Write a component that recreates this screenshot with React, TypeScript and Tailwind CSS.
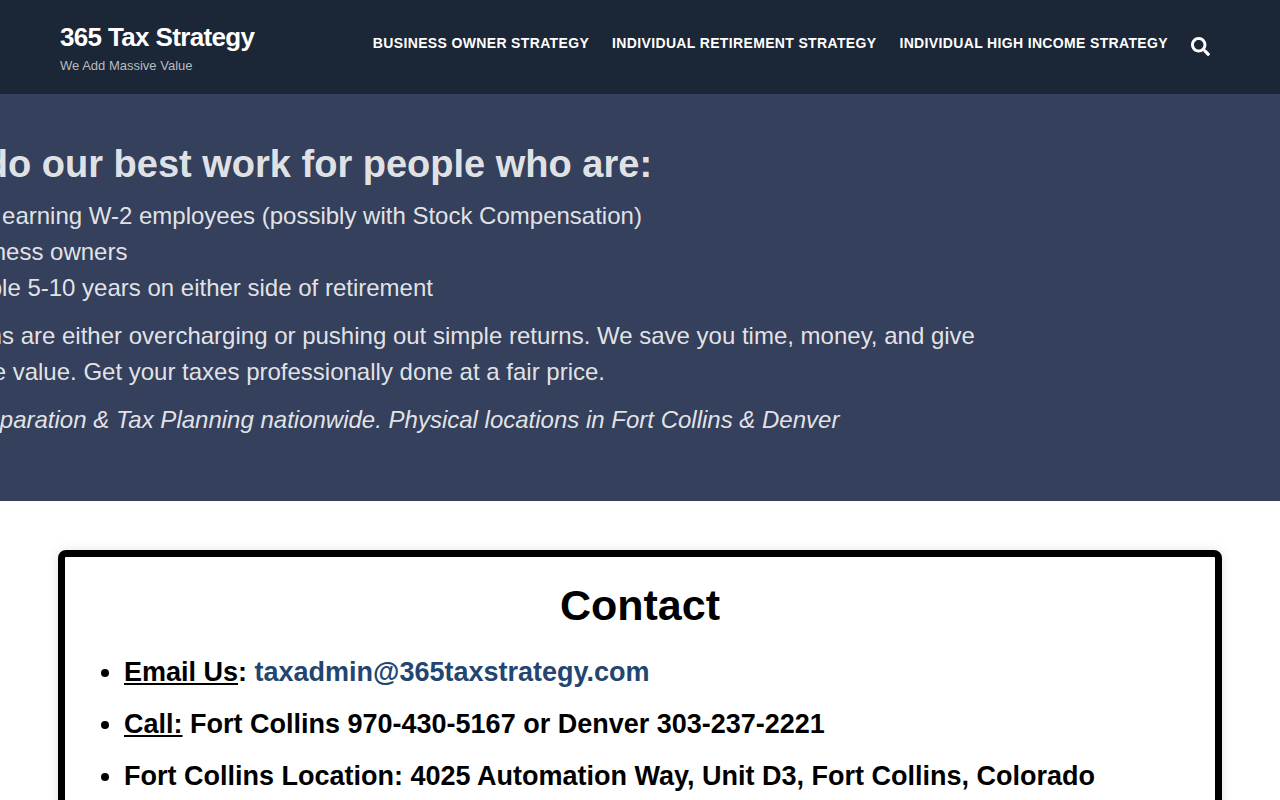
import { FaSearch } from "react-icons/fa";

const navLinks = [
  { label: "Business Owner Strategy", href: "#business-owner" },
  { label: "Individual Retirement Strategy", href: "#retirement" },
  { label: "Individual High Income Strategy", href: "#high-income" },
];

const clients = [
  "High earning W-2 employees (possibly with Stock Compensation)",
  "Business owners",
  "People 5-10 years on either side of retirement",
];

const Header = () => {
  return (
    <header className="bg-[#1b2636]">
      <div className="mx-auto flex max-w-[1160px] items-start justify-between pt-5 pb-4">
        <div>
          <a href="#home" className="block text-[26px] leading-[34px] font-bold tracking-tight text-white">
            365 Tax Strategy
          </a>
          <p className="text-[13px] leading-6 text-[#b9bcc0]">We Add Massive Value</p>
        </div>
        <nav className="flex items-start gap-[23px] pt-3 pr-[10px]">
          {navLinks.map((link) => (
            <a
              key={link.href}
              href={link.href}
              className="text-sm leading-[22px] font-bold tracking-wide text-white uppercase"
            >
              {link.label}
            </a>
          ))}
          <button type="button" aria-label="Search" className="mt-[5px] text-[19px] text-white">
            <FaSearch />
          </button>
        </nav>
      </div>
    </header>
  );
};

// The slide sits partly off the left edge while the slider moves
const Hero = () => {
  return (
    <section className="overflow-hidden bg-[#35405c] pt-12 pb-[63px]">
      <div className="mx-auto max-w-[1140px] -translate-x-[152px] text-2xl leading-9 text-white/87">
        <h2 className="mb-3 text-[38px] leading-11 font-bold">We do our best work for people who are:</h2>
        <ul className="mb-3 list-disc pl-7">
          {clients.map((item) => (
            <li key={item}>{item}</li>
          ))}
        </ul>
        <p className="mb-3">
          Tax firms are either overcharging or pushing out simple returns. We save you time, money, and give
          massive value. Get your taxes professionally done at a fair price.
        </p>
        <p>
          <em>Tax Preparation &amp; Tax Planning nationwide. Physical locations in Fort Collins &amp; Denver</em>
        </p>
      </div>
    </section>
  );
};

const Contact = () => {
  return (
    <section className="mx-auto mt-[49px] max-w-[1164px] rounded-lg border-[7px] border-black bg-white pt-5 pr-5 pb-10 pl-[59px] shadow-[0_0_12px_rgba(0,0,0,0.1)]">
      <h2 className="mb-[18px] -ml-[39px] text-center text-[43px] leading-14 font-bold">Contact</h2>
      <ul className="list-disc space-y-[10px] text-[27px] leading-[42px] font-bold">
        <li>
          <u>Email Us</u>:{" "}
          <a href="mailto:taxadmin@365taxstrategy.com" className="text-[#23456f]">
            taxadmin@365taxstrategy.com
          </a>
        </li>
        <li>
          <u>Call:</u> Fort Collins 970-430-5167 or Denver 303-237-2221
        </li>
        <li>Fort Collins Location: 4025 Automation Way, Unit D3, Fort Collins, Colorado</li>
      </ul>
    </section>
  );
};

const App = () => {
  return (
    <div className="max-h-screen overflow-hidden bg-white font-['Liberation_Sans',Arial,sans-serif] text-black">
      <Header />
      <main>
        <Hero />
        <Contact />
      </main>
    </div>
  );
};

export default App;
